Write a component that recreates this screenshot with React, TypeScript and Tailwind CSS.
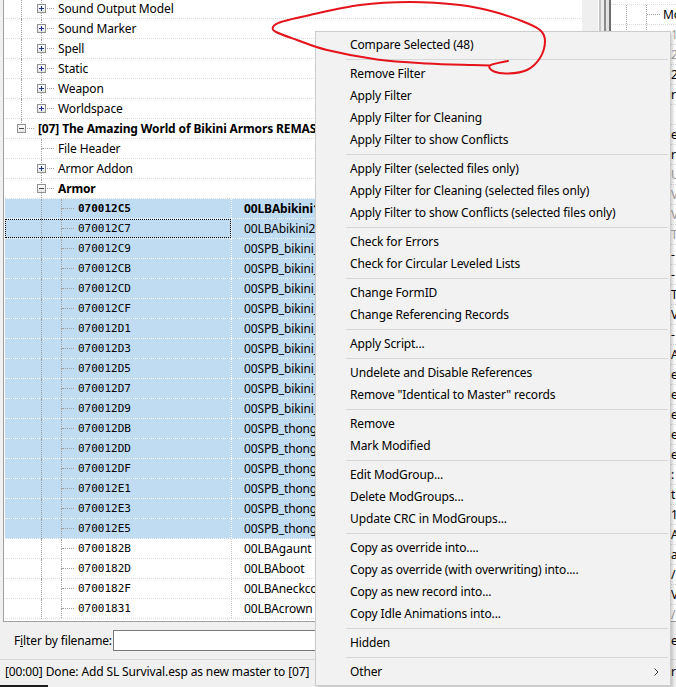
import React from 'react';

type Row = {
  depth: number;
  guides: boolean[];
  box?: 'plus' | 'minus';
  next: boolean;
  label: string;
  bold?: boolean;
  name?: string;
  selected?: boolean;
  focused?: boolean;
};

const groups = ['Sound Output Model', 'Sound Marker', 'Spell', 'Static', 'Weapon', 'Worldspace'];

const records: [string, string][] = [
  ['070012C5', '00LBAbikini1'],
  ['070012C7', '00LBAbikini2'],
  ['070012C9', '00SPB_bikini_top'],
  ['070012CB', '00SPB_bikini_top'],
  ['070012CD', '00SPB_bikini_top'],
  ['070012CF', '00SPB_bikini_top'],
  ['070012D1', '00SPB_bikini_bot'],
  ['070012D3', '00SPB_bikini_bot'],
  ['070012D5', '00SPB_bikini_bot'],
  ['070012D7', '00SPB_bikini_bot'],
  ['070012D9', '00SPB_bikini_bot'],
  ['070012DB', '00SPB_thong'],
  ['070012DD', '00SPB_thong'],
  ['070012DF', '00SPB_thong'],
  ['070012E1', '00SPB_thong'],
  ['070012E3', '00SPB_thong'],
  ['070012E5', '00SPB_thong'],
  ['0700182B', '00LBAgaunt'],
  ['0700182D', '00LBAboot'],
  ['0700182F', '00LBAneckcollar'],
  ['07001831', '00LBAcrown'],
];

const rows: Row[] = [
  ...groups.map((g, i) => ({ depth: 2, guides: [true], box: 'plus' as const, next: i < groups.length - 1, label: g })),
  { depth: 1, guides: [], box: 'minus', next: false, label: '[07] The Amazing World of Bikini Armors REMASTERED', bold: true },
  { depth: 2, guides: [false], next: true, label: 'File Header' },
  { depth: 2, guides: [false], box: 'plus', next: true, label: 'Armor Addon' },
  { depth: 2, guides: [false], box: 'minus', next: true, label: 'Armor', bold: true },
  ...records.map(([id, name], i) => ({
    depth: 3,
    guides: [false, true],
    next: true,
    label: id,
    name,
    bold: i === 0,
    selected: i < 17,
    focused: i === 1,
  })),
];

const menu: (string | null)[] = [
  'Compare Selected (48)', null,
  'Remove Filter', 'Apply Filter', 'Apply Filter for Cleaning', 'Apply Filter to show Conflicts', null,
  'Apply Filter (selected files only)', 'Apply Filter for Cleaning (selected files only)', 'Apply Filter to show Conflicts (selected files only)', null,
  'Check for Errors', 'Check for Circular Leveled Lists', null,
  'Change FormID', 'Change Referencing Records', null,
  'Apply Script...', null,
  'Undelete and Disable References', 'Remove "Identical to Master" records', null,
  'Remove', 'Mark Modified', null,
  'Edit ModGroup...', 'Delete ModGroups...', 'Update CRC in ModGroups...', null,
  'Copy as override into....', 'Copy as override (with overwriting) into....', 'Copy as new record into...', 'Copy Idle Animations into...', null,
  'Hidden', null,
  'Other',
];

// partial glyphs peeking out on the right of the menu
const rightChars: [string, boolean][] = [
  ['1', true], ['2', true], ['2', false], ['r', false], ['', false], ['e', false], ['r', false],
  ['U', true], ['V', true], ['V', true], ['T', true], ['-', false], ['-', false], ['T', false],
  ['V', false], ['-', false], ['A', false], ['e', false], ['e', false], ['e', false], ['e', false],
  ['e', false], [':', false], ['t', false], ['1(', false], ['A', false], ['a', false], ['/', false],
  ['V', false], ['/', true],
];

const ring: [number, number][] = [
  [508, 61], [490, 65.5], [494, 71.5], [508, 73.5], [527, 70], [540, 58], [545, 41], [540, 30],
  [523, 21.5], [493, 11.5], [460, 5], [410, 2], [360, 5], [310, 15], [281, 22], [273, 27],
  [276, 32], [297, 40], [327, 50], [377, 59.5], [427, 63.5], [473, 65], [490, 65.5],
];

function smooth(pts: [number, number][]) {
  let d = `M${pts[0][0]} ${pts[0][1]}`;
  for (let i = 0; i < pts.length - 1; i++) {
    const p0 = pts[i - 1] || pts[i];
    const p1 = pts[i];
    const p2 = pts[i + 1];
    const p3 = pts[i + 2] || p2;
    const c1 = [p1[0] + (p2[0] - p0[0]) / 6, p1[1] + (p2[1] - p0[1]) / 6];
    const c2 = [p2[0] - (p3[0] - p1[0]) / 6, p2[1] - (p3[1] - p1[1]) / 6];
    d += ` C${c1[0]} ${c1[1]} ${c2[0]} ${c2[1]} ${p2[0]} ${p2[1]}`;
  }
  return d;
}

function ExpandBox({ minus }: { minus?: boolean }) {
  return (
    <svg width="9" height="9" className="absolute left-[5px] top-[5px]">
      <defs>
        <linearGradient id="bx" x1="0" y1="0" x2="0" y2="1">
          <stop offset="0" stopColor="#ffffff" />
          <stop offset="1" stopColor="#e4e4e4" />
        </linearGradient>
      </defs>
      <rect x="0.5" y="0.5" width="8" height="8" fill="url(#bx)" stroke="#919191" />
      <path d="M2 4.5h5" stroke={minus ? '#4a4a4a' : '#1e3287'} />
      {!minus && <path d="M4.5 2v5" stroke="#1e3287" />}
    </svg>
  );
}

function TreeRow({ row }: { row: Row }) {
  const line = 'border-dotted border-[#a0a0a0]';
  const text = row.depth === 3
    ? "font-['DejaVu_Sans_Mono',monospace] text-[11px] tracking-normal"
    : '';
  return (
    <div
      className={`flex h-[20px] shrink-0 border-b border-dotted ${
        row.selected ? 'bg-[#c0dcf3] border-white' : 'border-[#dcdcdc]'
      }`}
    >
      <div
        className={`flex h-full items-stretch pl-[7px] ${
          row.name !== undefined ? 'w-[226px] shrink-0' : 'flex-1 whitespace-nowrap'
        } ${row.focused ? 'outline outline-1 outline-dotted outline-black -outline-offset-1' : ''}`}
      >
        {row.guides.map((g, i) => (
          <div key={i} className="w-[20px] h-[20px] shrink-0">
            {g && <div className={`w-[10px] h-[20px] border-r ${line}`} />}
          </div>
        ))}
        <div className="relative w-[24px] h-full shrink-0 flex">
          <div className="w-[10px] flex flex-col">
            <div className={`h-[10px] border-r ${line}`} />
            <div className={`flex-1 ${row.next ? `border-r ${line}` : ''}`} />
          </div>
          <div className="w-[12px]">
            <div className={`h-[10px] border-b ${line}`} />
          </div>
          {row.box && <ExpandBox minus={row.box === 'minus'} />}
        </div>
        <span className={`ml-[2px] leading-[19px] ${text} ${row.bold ? 'font-bold' : ''}`}>{row.label}</span>
      </div>
      {row.name !== undefined && (
        <div
          className={`flex-1 pl-[12px] leading-[19px] whitespace-nowrap border-l border-dotted ${
            row.selected ? 'border-white' : 'border-[#c8c8c8]'
          } ${row.bold ? 'font-bold' : ''}`}
        >
          {row.name}
        </div>
      )}
    </div>
  );
}

export default function App() {
  const dot = 'border-dotted border-[#a0a0a0]';
  return (
    <div className="relative w-[676px] h-[687px] overflow-hidden bg-[#f0f0f0] text-[12px] tracking-[-0.13px] text-black font-['Segoe_UI','Noto_Sans',sans-serif]">
      {/* main panes */}
      <div className="flex h-[622px]">
        <div className="w-[3px] shrink-0" />
        <div className="w-[579px] shrink-0 bg-white border-l border-b border-[#a0a0a0] pl-[1px] overflow-hidden">
          <div className="flex flex-col -mt-[1px]">
            {rows.map((r, i) => (
              <TreeRow key={i} row={r} />
            ))}
          </div>
        </div>
        <div className="w-[16px] shrink-0 bg-[#efefef] border-b border-[#a0a0a0]" />
        <div className="w-[13px] shrink-0 flex">
          <div className="w-[1px] bg-[#fafafa]" />
          <div className="w-[2px] bg-[#c4c4c4]" />
          <div className="w-[3px] bg-[#ececec]" />
          <div className="w-[2px] bg-[#8c8c8c]" />
          <div className="w-[3px] bg-[#e2e2e2]" />
          <div className="w-[2px] bg-[#6e6e6e]" />
        </div>
        <div className="flex-1 min-w-0 bg-white border-b border-[#a0a0a0] overflow-hidden flex flex-col">
          <div className="h-[5px] shrink-0 border-b border-dotted border-[#dcdcdc]" />
          <div className="flex h-[20px] shrink-0 border-b border-dotted border-[#dcdcdc] pl-[15px]">
            <div className={`w-[20px] shrink-0 border-l ${dot}`} />
            <div className={`w-[14px] shrink-0 border-l ${dot}`}>
              <div className={`h-[10px] border-b ${dot}`} />
            </div>
            <span className="ml-[3px] leading-[19px] whitespace-nowrap">Morph</span>
          </div>
          {rightChars.map(([c, grey], i) => (
            <div key={i} className="flex h-[20px] shrink-0 border-b border-dotted border-[#dcdcdc] pl-[15px]">
              <div className={`w-[20px] shrink-0 border-l ${dot}`} />
              <div className={`w-[25px] shrink-0 border-l ${dot}`} />
              <span className={`leading-[19px] whitespace-nowrap ${grey ? 'text-[#a0a0a0]' : ''}`}>{c}</span>
            </div>
          ))}
        </div>
      </div>

      {/* filter row */}
      <div className="flex items-center h-[37px]">
        <span className="ml-[14px] w-[99px] shrink-0 whitespace-nowrap">
          F<u>i</u>lter by filename:
        </span>
        <div className="w-[480px] h-[21px] shrink-0 bg-white border border-[#7a7a7a]" />
        <span className="ml-[78px]">e</span>
      </div>

      {/* status bar */}
      <div className="h-[28px] border-t border-[#d7d7d7] flex pt-[3px]">
        <span className="pl-[5px] w-[671px] shrink-0 whitespace-nowrap">
          [00:00] Done: Add SL Survival.esp as new master to [07]
        </span>
        <span>r</span>
      </div>
      <div className="absolute left-0 bottom-0 w-[48px] h-[2px] bg-[#1c1c1c]" />

      {/* context menu */}
      <div className="absolute left-[315px] top-[31px] w-[356px] bg-[#f2f2f2] border border-[#cccccc] py-[2px] shadow-[2px_2px_3px_rgba(0,0,0,0.18)]">
        {menu.map((m, i) =>
          m === null ? (
            <div key={i} className="h-[7px] flex items-center pl-[30px] pr-[2px]">
              <div className="h-px w-full bg-[#d7d7d7]" />
            </div>
          ) : (
            <div key={i} className="h-[22px] flex items-center pl-[34px] whitespace-nowrap">
              <span>{m}</span>
              {m === 'Other' && (
                <svg width="5" height="8" className="ml-auto mr-[11px]" viewBox="0 0 5 8">
                  <path d="M0.5 0.5l3.5 3.5-3.5 3.5" fill="none" stroke="#333" />
                </svg>
              )}
            </div>
          ),
        )}
      </div>

      {/* red hand-drawn annotation */}
      <svg className="absolute left-0 top-0 pointer-events-none" width="676" height="90">
        <path d={smooth(ring)} fill="none" stroke="#e5131b" strokeWidth="2" strokeLinecap="round" strokeLinejoin="round" />
      </svg>
    </div>
  );
}
